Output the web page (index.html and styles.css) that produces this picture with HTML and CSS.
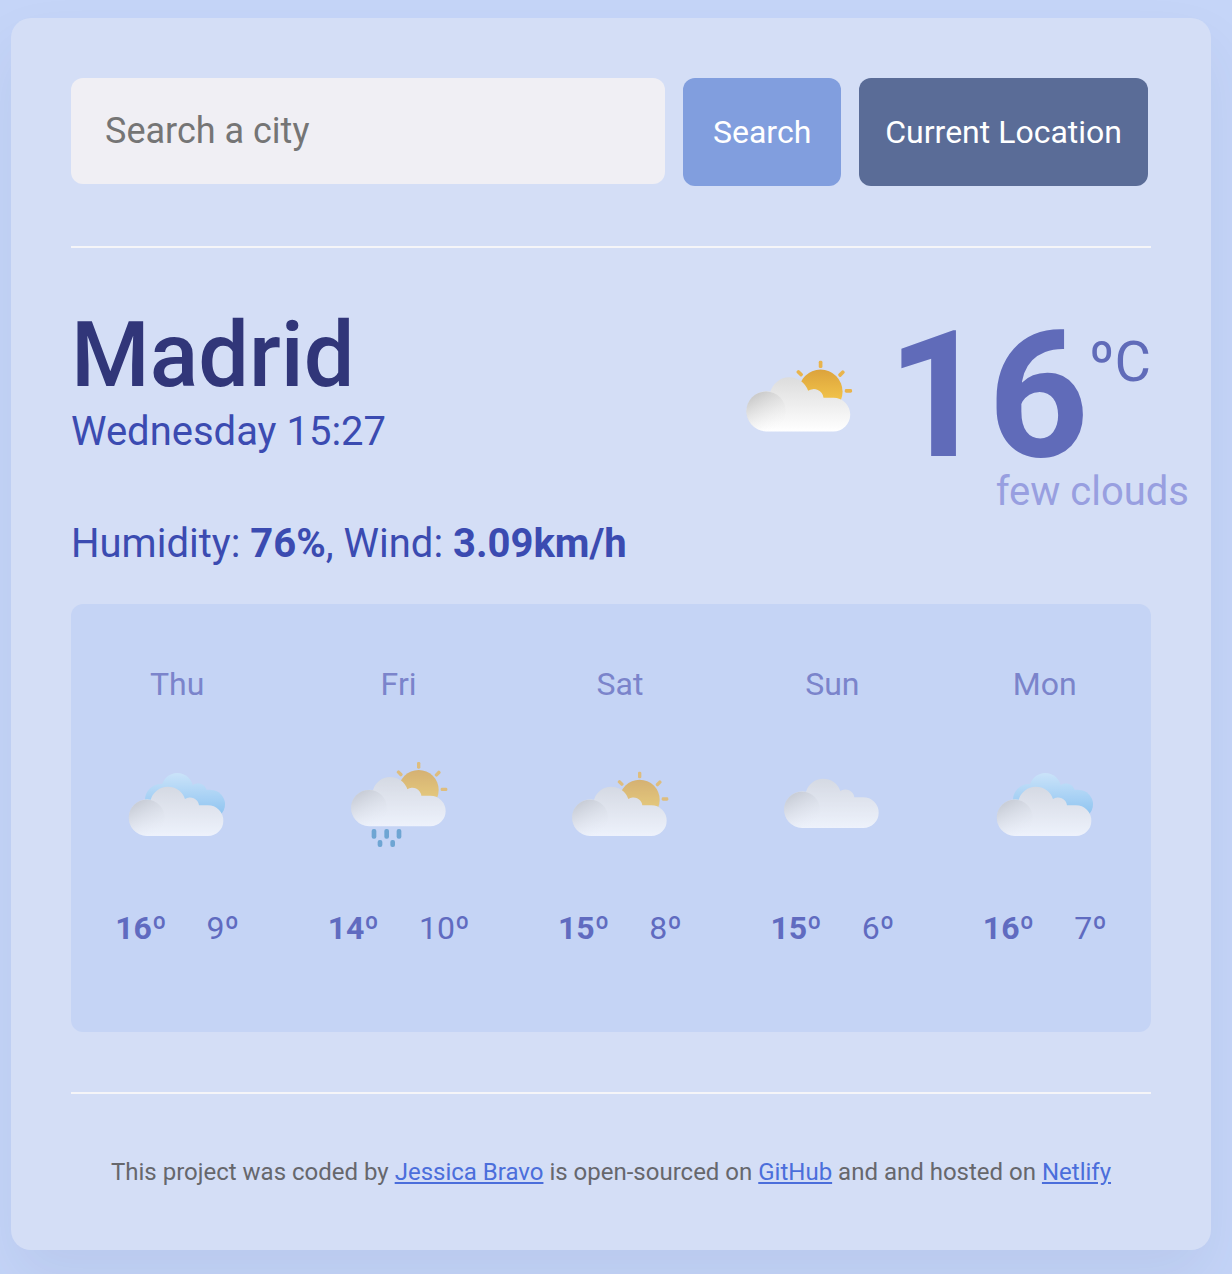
FILE: index.html
```html
<!DOCTYPE html>
<html lang="en">
<head>
<meta charset="utf-8">
<meta name="viewport" content="width=device-width, initial-scale=1">
<title>Weather</title>
<link rel="stylesheet" href="styles.css">
</head>
<body>
<svg class="sprite" aria-hidden="true">
  <defs>
    <linearGradient id="cloud-fill" gradientUnits="userSpaceOnUse" x1="0" y1="0" x2="0" y2="149">
      <stop offset="0" stop-color="#dcdcdc"/><stop offset="1" stop-color="#ffffff"/>
    </linearGradient>
    <linearGradient id="puff-fill" x1="0.25" y1="0" x2="0.8" y2="0.9">
      <stop offset="0" stop-color="#c6c6c6"/><stop offset="1" stop-color="#f4f4f4" stop-opacity="0"/>
    </linearGradient>
    <linearGradient id="sun-fill" gradientUnits="userSpaceOnUse" x1="0" y1="-20" x2="0" y2="75">
      <stop offset="0" stop-color="#dca33c"/><stop offset="1" stop-color="#f5c84c"/>
    </linearGradient>
    <linearGradient id="blue-fill" gradientUnits="userSpaceOnUse" x1="0" y1="-40" x2="0" y2="80">
      <stop offset="0" stop-color="#cdeafc"/><stop offset="1" stop-color="#7cc0f0"/>
    </linearGradient>
    <path id="cloud-shape" d="M54 149A55 55 0 1 1 66 40A54 54 0 0 1 169 38A27 27 0 0 1 211 57H238A46 46 0 0 1 238 149Z"/>
    <g id="cloud">
      <use href="#cloud-shape" fill="url(#cloud-fill)"/>
      <circle cx="54" cy="94" r="54" fill="url(#puff-fill)"/>
    </g>
    <g id="sun" fill="url(#sun-fill)">
      <circle cx="203" cy="40" r="60"/>
      <g fill="#e9b44c">
        <rect x="198" y="-44" width="10" height="20" rx="4"/>
        <rect x="269" y="33" width="20" height="10" rx="4"/>
        <rect x="250" y="-14" width="20" height="10" rx="4" transform="rotate(-45 260 -9)"/>
        <rect x="136" y="-15" width="20" height="10" rx="4" transform="rotate(45 146 -10)"/>
      </g>
    </g>
    <g id="blue-cloud">
      <circle cx="97" cy="41" r="48"/>
      <circle cx="146" cy="7" r="47"/>
      <circle cx="208" cy="17" r="26"/>
      <circle cx="246" cy="54" r="43"/>
      <path d="M97 10H246V96H97Z"/>
    </g>
  </defs>
  <symbol id="few-clouds" viewBox="0 0 360 336">
    <g transform="translate(36 109)"><use href="#sun"/><use href="#cloud"/></g>
  </symbol>
  <symbol id="broken-clouds" viewBox="0 0 360 336">
    <g transform="translate(35 109)">
      <use href="#blue-cloud" fill="url(#blue-fill)"/>
      <use href="#cloud"/>
    </g>
  </symbol>
  <symbol id="rain" viewBox="0 0 360 336">
    <g transform="translate(36 80)">
      <use href="#sun"/><use href="#cloud"/>
      <g fill="#4a92c6">
        <rect x="62" y="157" width="14" height="29" rx="6"/>
        <rect x="100" y="157" width="14" height="29" rx="6"/>
        <rect x="137" y="157" width="14" height="29" rx="6"/>
        <rect x="80" y="190" width="14" height="21" rx="6"/>
        <rect x="118" y="190" width="14" height="21" rx="6"/>
      </g>
    </g>
  </symbol>
  <symbol id="clouds" viewBox="0 0 360 336">
    <g transform="translate(36 85)"><use href="#cloud"/></g>
  </symbol>
</svg>

<main class="card">
  <form class="search">
    <input class="search-input" type="text" placeholder="Search a city" aria-label="Search a city">
    <button class="button button-search" type="button">Search</button>
    <button class="button button-location" type="button">Current Location</button>
  </form>

  <section class="current">
    <div class="place">
      <h1 class="city">Madrid</h1>
      <p class="detail">Wednesday 15:27</p>
      <p class="detail conditions">Humidity: <strong>76%</strong>, Wind: <strong>3.09km/h</strong></p>
    </div>
    <div class="reading">
      <div class="temperature">
        <svg class="current-icon" role="img" aria-label="few clouds"><use href="#few-clouds"/></svg>
        <span class="degrees">16</span>
        <span class="unit">ºC</span>
      </div>
      <p class="description">few clouds</p>
    </div>
  </section>

  <section class="forecast">
    <div class="day">
      <span class="day-name">Thu</span>
      <svg class="day-icon" aria-hidden="true"><use href="#broken-clouds"/></svg>
      <div class="range"><strong>16º</strong><span>9º</span></div>
    </div>
    <div class="day">
      <span class="day-name">Fri</span>
      <svg class="day-icon" aria-hidden="true"><use href="#rain"/></svg>
      <div class="range"><strong>14º</strong><span>10º</span></div>
    </div>
    <div class="day">
      <span class="day-name">Sat</span>
      <svg class="day-icon" aria-hidden="true"><use href="#few-clouds"/></svg>
      <div class="range"><strong>15º</strong><span>8º</span></div>
    </div>
    <div class="day">
      <span class="day-name">Sun</span>
      <svg class="day-icon" aria-hidden="true"><use href="#clouds"/></svg>
      <div class="range"><strong>15º</strong><span>6º</span></div>
    </div>
    <div class="day">
      <span class="day-name">Mon</span>
      <svg class="day-icon" aria-hidden="true"><use href="#broken-clouds"/></svg>
      <div class="range"><strong>16º</strong><span>7º</span></div>
    </div>
  </section>

  <footer class="credits">This project was coded by <a href="#">Jessica Bravo</a> is open-sourced on <a href="#">GitHub</a> and and hosted on <a href="#">Netlify</a></footer>
</main>
</body>
</html>
```
FILE: styles.css
```css
* {
  box-sizing: border-box;
}

body {
  margin: 0;
  padding: 18px 21px 24px 11px;
  background: #c5d5f8;
  font-family: Roboto, "Liberation Sans", sans-serif;
}

h1,
p {
  margin: 0;
}

.sprite {
  position: absolute;
  width: 0;
  height: 0;
}

.card {
  padding: 60px;
  border-radius: 20px;
  background: #d4def6;
  box-shadow: 0 30px 60px rgba(50, 65, 110, 0.08);
}

.search {
  display: flex;
  align-items: flex-start;
  gap: 18px;
  padding: 0 3px 60px 0;
  border-bottom: 2px solid #f5f5f8;
}

.search-input {
  flex: 1;
  min-width: 0;
  height: 106px;
  padding: 0 34px;
  border: 0;
  border-radius: 12px;
  background: #f0eff4;
  font: 36px Roboto, "Liberation Sans", sans-serif;
}

.search-input::placeholder {
  color: #757575;
}

.button {
  height: 108px;
  padding: 0 26px;
  border: 0;
  border-radius: 12px;
  color: #fff;
  font: 32px Roboto, "Liberation Sans", sans-serif;
  white-space: nowrap;
}

.button-search {
  padding: 0 30px;
  background: #819ede;
}

.button-location {
  background: #5a6c97;
}

.current {
  display: flex;
  justify-content: space-between;
  padding: 56px 0 36px;
}

.city {
  color: #313679;
  font-size: 90px;
  font-weight: 500;
  line-height: 104px;
}

.detail {
  color: #3b4bb1;
  font-size: 40px;
  line-height: 48px;
}

.conditions {
  margin-top: 64px;
  white-space: nowrap;
}

.reading {
  display: flex;
  flex-direction: column;
  align-items: flex-end;
}

.temperature {
  display: flex;
  align-items: flex-start;
  color: #606bb9;
}

.current-icon {
  width: 132px;
  height: 123px;
  margin: 33px 22px 0 0;
}

.degrees {
  margin-top: 20px;
  font-size: 176px;
  font-weight: 700;
  line-height: 144px;
}

.unit {
  margin-top: 25px;
  font-size: 56px;
  line-height: 66px;
}

.description {
  margin-right: -38px;
  color: #989fe0;
  font-size: 40px;
  line-height: 48px;
}

.forecast {
  display: flex;
  justify-content: space-around;
  padding: 56px 0 80px;
  border-radius: 12px;
  background: #c5d4f5;
}

.day {
  display: flex;
  flex-direction: column;
  align-items: center;
  gap: 42px;
  font-size: 32px;
  line-height: 48px;
}

.day-name {
  color: #7b84cb;
}

.day-icon {
  width: 120px;
  height: 112px;
  opacity: 0.7;
}

.range {
  display: flex;
  gap: 40px;
  color: #606bc0;
}

.credits {
  margin-top: 60px;
  padding-top: 60px;
  border-top: 2px solid #f5f5f8;
  color: #66676c;
  font-size: 24px;
  line-height: 36px;
  text-align: center;
}

.credits a {
  color: #4b6edb;
}
```
